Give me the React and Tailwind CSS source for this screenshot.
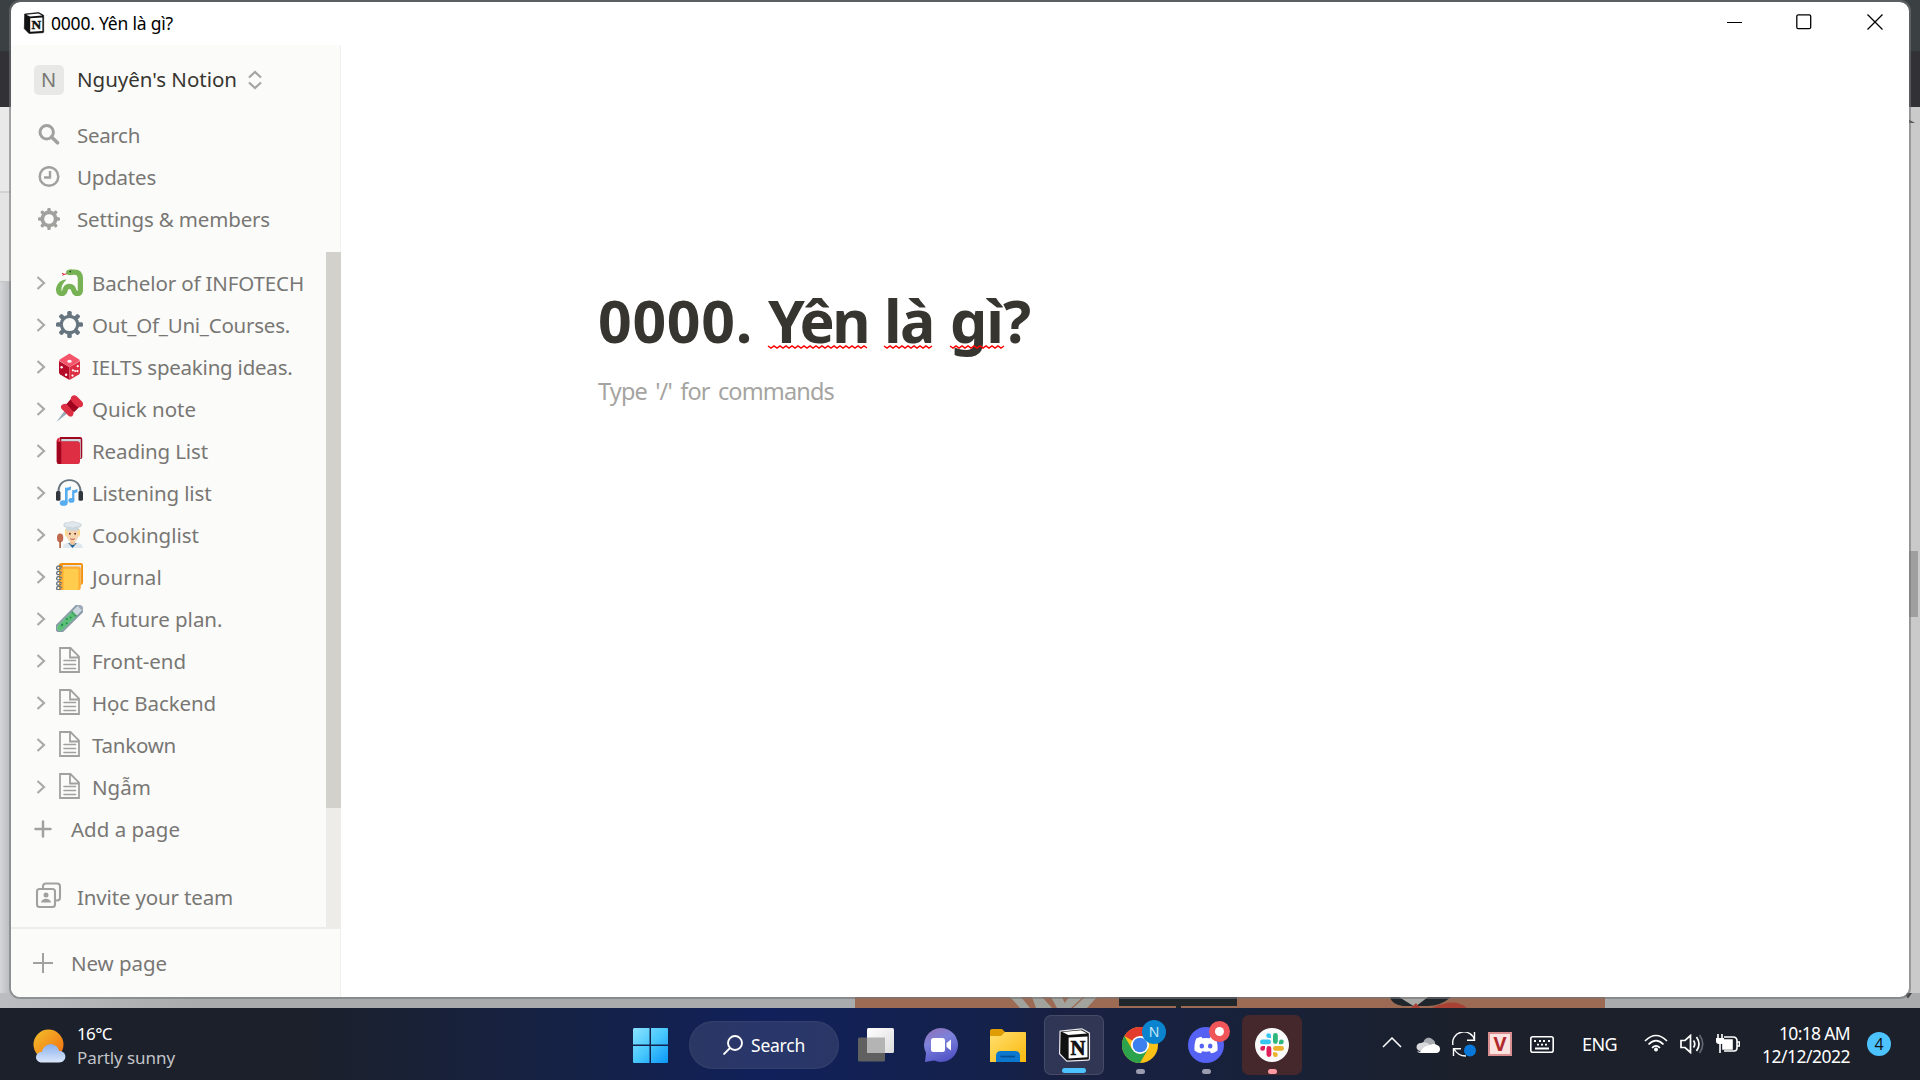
import React, { useLayoutEffect, useRef, useState } from "react";

/* Text whose tracking is adjusted so that the line fills a given width. */
function Fit({ w, className = "", children }) {
  const ref = useRef(null);
  const [ls, setLs] = useState(0);
  useLayoutEffect(() => {
    const natural = ref.current.getBoundingClientRect().width;
    setLs((w - natural) / [...String(children)].length);
  }, []);
  return (
    <span ref={ref} className={"inline-block whitespace-nowrap " + className} style={{ letterSpacing: ls }}>
      {children}
    </span>
  );
}

function NotionLogo({ className, halo }) {
  return (
    <svg className={className} viewBox="0 0 32 33">
      <path d="M2 3 23 .8 30.500 5v24.500q0 1.500-1.500 1.600L8.500 32.200 1.500 25z" fill="#111" stroke={halo ? "#e8e8ee" : "#111"} strokeWidth={halo ? 1.200 : 1} strokeLinejoin="round" />
      <path d="M4.300 4 22.500 2.300l5.700 3.100L10 6.800z" fill="#fff" />
      <path d="M10.300 9.300 28.600 8.200v20.300L10.300 29.700z" fill="#fff" />
      <text x="19.400" y="26" textAnchor="middle" fontSize="20" fontWeight="700" fontFamily="Liberation Serif, serif" fill="#111" stroke="#111" strokeWidth=".7">N</text>
    </svg>
  );
}

function Snake() {
  return (
    <svg viewBox="0 0 36 36" className="size-[27px]">
      <path d="M15 6 11 7.200 8 5.500M11 7.200 8.500 8.500" fill="none" stroke="#dd2e44" strokeWidth="1.400" />
      <path d="M14 14C5 14 0 21 0 29h7c0-6 2-10 7-15z" fill="#77b255" />
      <path d="M3.700 28c-.5 6 7.300 6.500 8.300 1 1-8 10.500-8 12 0 1.500 5.500 8.500 5 8.500-1V13c0-6-3-9-8-9h-5" fill="none" stroke="#77b255" strokeWidth="7" strokeLinecap="round" />
      <ellipse cx="19" cy="4.500" rx="5.500" ry="3.700" fill="#77b255" />
      <circle cx="19" cy="3.400" r="1.100" fill="#292f33" />
    </svg>
  );
}
function Gear() {
  return (
    <svg viewBox="0 0 36 36" className="size-[27px]">
      <g fill="#66757f">
        {[0, 45, 90, 135].map((a) => (
          <rect key={a} x="15" y="0" width="6" height="36" rx="2" transform={`rotate(${a} 18 18)`} />
        ))}
        <circle cx="18" cy="18" r="13" />
      </g>
      <circle cx="18" cy="18" r="8.800" fill="#fbfbfa" />
    </svg>
  );
}
function Die() {
  return (
    <svg viewBox="0 0 36 36" className="size-[27px]">
      <path d="M18 .5 31 8.500q1.500 1 0 2L18 19 5 10.500q-1.500-1 0-2z" fill="#f4556a" />
      <path d="M4 10.500l14 8.500v17L5.500 28.500Q4 27.500 4 26z" fill="#b50b28" />
      <path d="M32 10.500 18 19v17l12.500-7.500Q32 27.500 32 26z" fill="#dd2e44" />
      <g fill="#fff">
        <ellipse cx="18" cy="11" rx="3" ry="2" />
        <circle cx="7.500" cy="19" r="1.600" /><circle cx="13.500" cy="29" r="1.600" />
        <circle cx="29" cy="17.500" r="1.500" /><circle cx="22" cy="30" r="1.500" />
        <circle cx="28.500" cy="24" r="1.500" /><circle cx="22.500" cy="23" r="1.500" /><circle cx="25.500" cy="24" r="1.300" />
      </g>
    </svg>
  );
}
function Pin() {
  return (
    <svg viewBox="0 0 36 36" className="size-[27px]">
      <path d="M0.500 36 13 19l4 4z" fill="#99aab5" />
      <path d="M7 14c3-3 8-4 12 1 4 4 6 9 3 13-1 1-4 1-5 0L7 18q-1-2 0-4z" fill="#dd2e44" />
      <path d="m14 12 7-8 11 11-8 8z" fill="#a0041e" />
      <path d="M20 3c2-3 5-4 8-1l7 7c2 3 1 6-1 7-3 1-6 0-9-3s-6-6-5-10z" fill="#dd2e44" />
    </svg>
  );
}
function Book() {
  return (
    <svg viewBox="0 0 36 36" className="size-[27px]">
      <path d="M5 0h27q3 0 3 3v24q0 2-2 2L8 32z" fill="#a0041e" />
      <path d="M7 2.500h26v25l-3 2V6H7z" fill="#ccd6dd" />
      <path d="M5 1Q1 1 1 5v28q0 3 3 3h25q3 0 3-3V9q0-3-3-3H7Q4 6 5 3z" fill="#dd2e44" />
      <path d="M1 4q0 3 6 3v29H4q-3 0-3-3z" fill="#a0041e" />
    </svg>
  );
}
function Headphones() {
  return (
    <svg viewBox="0 0 36 36" className="size-[27px]">
      <path d="M3.500 20C2 8 9 1.500 18 1.500S34 8 32.500 20" fill="none" stroke="#66757f" strokeWidth="2.600" />
      <rect x="0" y="16" width="6" height="13" rx="2" fill="#31373d" />
      <rect x="30" y="16" width="6" height="13" rx="2" fill="#31373d" />
      <g fill="#55acee">
        <path d="M12 11.500q5 0 8-2v4.500q-2 1.500-4.500 1.500v16.500H12z" />
        <ellipse cx="10.200" cy="32" rx="5.200" ry="3.800" />
        <path d="M21.500 15q4 0 7-2v4.500q-2 1-4 1v10h-3z" />
        <ellipse cx="20.500" cy="28.500" rx="4" ry="3.200" />
      </g>
    </svg>
  );
}
function Chef() {
  return (
    <svg viewBox="0 0 36 36" className="size-[27px]">
      <path d="M9 36c0-5 4-7 8-7h10c5 0 9 3 9 7z" fill="#e1e8ed" />
      <path d="m16 29 6 7 6-7-6 2z" fill="#226699" />
      <rect x="18.500" y="24" width="7" height="8" rx="3" fill="#f1c39a" />
      <path d="M12 11h20v7q0 3-3 3H15q-3 0-3-3z" fill="#ffd983" />
      <ellipse cx="22" cy="18" rx="8" ry="10" fill="#f6d5b0" />
      <circle cx="18.500" cy="17" r="1.200" fill="#662113" /><circle cx="25.500" cy="17" r="1.200" fill="#662113" />
      <path d="M19 23.500q3 2 6 0" stroke="#c1694f" strokeWidth="1.500" fill="none" />
      <path d="M13.500 13V9Q9 8 10 4.500T16 2q6-3.500 12 0 5-.5 6 2.500T30.500 9v4z" fill="#ccd6dd" />
      <path d="M11 5q2-3 5-2 6-3 12 0 4-.5 5 2-3 3-6 2-5 3-10 0-3 2-6-2z" fill="#e1e8ed" />
      <ellipse cx="5.500" cy="22.500" rx="4.200" ry="5.800" fill="#c1694f" />
      <path d="M4.500 27h2v9h-2z" fill="#a0512f" />
    </svg>
  );
}
function Notebook() {
  return (
    <svg viewBox="0 0 36 36" className="size-[27px]">
      <path d="M8 0h25q3 0 3 3v23q0 3-3 3H8z" fill="#f4900c" />
      <path d="M9 2.500h24.500V27L31 29V6H9z" fill="#e1e8ed" />
      <path d="M4 3q0-3 4-3v36H7q-3 0-3-3z" fill="#f4900c" />
      <path d="M5 4.500h24q4 0 4 3V33q0 3-3 3H8q-3 0-3-3z" fill="#ffac33" />
      <path d="M10 7.500h18q2 0 2 2V33q0 3-3 3H10z" fill="#ffcc4d" />
      {[7, 14, 21, 28, 34].map((y) => (
        <path key={y} d={`M8 ${y - 1}Q2 ${y - 5} 1 ${y - 1}t6 1.500`} fill="none" stroke="#66757f" strokeWidth="1.800" />
      ))}
    </svg>
  );
}
function Tube() {
  return (
    <svg viewBox="0 0 36 36" className="size-[27px]">
      <g transform="rotate(45 18 18)">
        <path d="M12.500-3h11v38q0 6-5.500 6t-5.500-6z" fill="#ccd6dd" stroke="#8899a6" strokeWidth="2.500" />
        <path d="M13.800 8h8.400v27q0 4.500-4.200 4.500t-4.200-4.500z" fill="#5cc07a" />
        <path d="M13.800 8q4 3 8.400 0v3h-8.400z" fill="#3e9b5c" />
        <rect x="10" y="-5.500" width="16" height="4" rx="2" fill="#9eacba" />
        <g fill="#268d4a"><circle cx="18" cy="16" r="1.300" /><circle cx="16" cy="21" r="1.300" /><circle cx="20" cy="25" r="1.300" /><circle cx="17" cy="31" r="1.600" /></g>
      </g>
    </svg>
  );
}
function Doc() {
  return (
    <svg viewBox="0 0 22 26" className="ml-[3px] h-[26px] w-[22px]" fill="none" stroke="#a1a19e" strokeWidth="1.800">
      <path d="M1 1h10.500l8.500 8.500V25H1zM11 1v9.500h9" />
      <path d="M5 13.500h11.500M5 17.500h11.500M5 21.500h11.500" strokeWidth="1.600" strokeLinecap="round" />
    </svg>
  );
}

const pages = [
  ["Bachelor of INFOTECH", 212, Snake],
  ["Out_Of_Uni_Courses.", 198, Gear],
  ["IELTS speaking ideas.", 200.500, Die],
  ["Quick note", 104, Pin],
  ["Reading List", 116, Book],
  ["Listening list", 119.500, Headphones],
  ["Cookinglist", 107, Chef],
  ["Journal", 70, Notebook],
  ["A future plan.", 130.500, Tube],
  ["Front-end", 94, Doc],
  ["Học Backend", 124, Doc],
  ["Tankown", 84, Doc],
  ["Ngẫm", 59, Doc],
];

function Sidebar() {
  return (
    <aside className="flex w-[330px] shrink-0 flex-col border-r border-[#f1f1ef] bg-[#fbfbfa] text-[20.5px] text-[#787774]">
      <div className="flex h-[69px] items-center pl-[23px]">
        <div className="flex size-[30px] items-center justify-center rounded-[5px] bg-[#e8e8e6] pr-px text-[20px]">N</div>
        <Fit w={160} className="ml-[13px] font-[450] text-[#37352f]">Nguyên's Notion</Fit>
        <svg viewBox="0 0 14 20" className="ml-[11px] h-5 w-3.5" fill="none" stroke="#a3a3a0" strokeWidth="2.200">
          <path d="m1 7.500 6-5.500 6 5.500M1 12.500l6 5.500 6-5.500" />
        </svg>
      </div>
      <div className="flex h-[42px] items-center pl-[27px]">
        <svg viewBox="0 0 22 22" className="size-[22px]" fill="none" stroke="#a1a19e">
          <circle cx="8.700" cy="8.200" r="6.700" strokeWidth="3" /><path d="m13.500 13 6 5.800" strokeWidth="3.600" strokeLinecap="round" />
        </svg>
        <Fit w={63} className="ml-[17px]">Search</Fit>
      </div>
      <div className="flex h-[42px] items-center pl-[26.5px]">
        <svg viewBox="0 0 22 22" className="size-[22px]" fill="none" stroke="#a1a19e">
          <circle cx="11" cy="10.500" r="9.300" strokeWidth="2.500" /><path d="M12 5v6.500H6" strokeWidth="2.400" />
        </svg>
        <Fit w={79} className="ml-[17.5px]">Updates</Fit>
      </div>
      <div className="flex h-[42px] items-center pl-[26.5px]">
        <svg viewBox="0 0 22 22" className="size-[22px]">
          <g fill="#a1a19e">
            {[0, 45, 90, 135].map((a) => (
              <rect key={a} x="9.300" y="0" width="3.400" height="22" rx="1.200" transform={`rotate(${a} 11 11)`} />
            ))}
            <circle cx="11" cy="11" r="8.500" />
          </g>
          <circle cx="11" cy="11" r="4.800" fill="#fbfbfa" />
        </svg>
        <Fit w={193} className="ml-[17.5px]">Settings &amp; members</Fit>
      </div>

      <div className="mt-[12px] flex h-[675px]">
        <div className="flex grow flex-col pt-[10px]">
          {pages.map(([name, w, Icon]) => (
            <div key={name} className="flex h-[42px] items-center pl-[25px]">
              <svg viewBox="0 0 10 14" className="mb-px mr-[10px] h-3.5 w-2.5" fill="none" stroke="#aaaaa7" strokeWidth="2.200">
                <path d="m1.500 1 6.500 6-6.500 6" />
              </svg>
              <div className="mb-0.5 flex w-[36px]"><Icon /></div>
              <Fit w={w}>{name}</Fit>
            </div>
          ))}
          <div className="flex h-[42px] items-center pl-[23px]">
            <svg viewBox="0 0 18 18" className="size-[18px]" stroke="#a1a19e" strokeWidth="2.500" strokeLinecap="round"><path d="M9 1.500v15M1.500 9h15" /></svg>
            <Fit w={109} className="ml-[19px]">Add a page</Fit>
          </div>
          <div className="mt-[26px] flex h-[42px] items-center pl-[24px]">
            <svg viewBox="0 0 28 28" className="-mt-1 size-7" fill="none" stroke="#a1a19e" strokeWidth="2.100">
              <path d="M8 7V5.500Q8 2.500 11 2.500h11q3 0 3 3v11q0 3-3 3h-2" />
              <rect x="2" y="8" width="18" height="18" rx="2.500" />
              <circle cx="11" cy="14" r="2.500" fill="#a1a19e" stroke="none" /><path d="M6 21.500q1-3.700 5-3.700t5 3.700z" fill="#a1a19e" stroke="none" />
            </svg>
            <Fit w={156} className="ml-[14px]">Invite your team</Fit>
          </div>
        </div>
        <div className="-mr-px w-[15px] bg-[#edece9]"><div className="h-[556px] bg-[#d3d1cb]" /></div>
      </div>
      <div className="flex grow items-center border-t-2 border-[#ededeb] pl-[22px]">
        <svg viewBox="0 0 20 20" className="size-5" stroke="#a1a19e" strokeWidth="2" strokeLinecap="round"><path d="M10 .5v19M.5 10h19" /></svg>
        <Fit w={96} className="ml-[18px]">New page</Fit>
      </div>
    </aside>
  );
}

function Misspelt({ children, w, wave }) {
  const pts = [];
  for (let i = 0, x = 0; x <= wave; x += 3, i++) pts.push(`${x},${i % 2 ? 3 : 1}`);
  return (
    <span className="relative inline-block">
      <Fit w={w}>{children}</Fit>
      <svg className="absolute left-0 top-[61px] h-1 overflow-visible" style={{ width: wave }}>
        <polyline points={pts.join(" ")} fill="none" stroke="#f00" strokeWidth="1.500" />
      </svg>
    </span>
  );
}

function NotionWindow() {
  return (
    <div className="absolute left-[9px] top-0 flex h-[999px] w-[1902px] flex-col overflow-hidden rounded-[11px] border-2 border-[#737578]/60 bg-white bg-clip-padding">
      <header className="flex h-[43px] shrink-0 items-center justify-between">
        <div className="flex items-center pl-[12px] text-[17.5px] text-black">
          <NotionLogo className="mb-0.5 h-[22px] w-[22px]" />
          <Fit w={122} className="ml-[6px]">0000. Yên là gì?</Fit>
        </div>
        <div className="mb-[3px] flex items-center pr-[26px]">
          <div className="h-px w-[15px] bg-black" />
          <svg viewBox="0 0 16 16" className="ml-[54px] size-4" fill="none" stroke="#000" strokeWidth="1.300"><rect x=".8" y=".8" width="13.900" height="13.900" rx="1.500" /></svg>
          <svg viewBox="0 0 16 16" className="ml-[55px] size-4" stroke="#000" strokeWidth="1.300"><path d="m.5.5 15 15M15.500.5l-15 15" /></svg>
        </div>
      </header>
      <div className="flex grow">
        <Sidebar />
        <main className="flex grow flex-col pl-[257px] pt-[239px]">
          <h1 className="flex h-[72px] text-[59px] font-bold leading-[72px] text-[#37352f]">
            <Fit w={155} className="mr-[15px]">0000.</Fit>
            <Misspelt w={100} wave={100}>Yên</Misspelt>
            <span className="w-[16px]" />
            <Misspelt w={50} wave={49}>là</Misspelt>
            <span className="w-[16px]" />
            <Misspelt w={53} wave={54}>gì</Misspelt>
            <span>?</span>
          </h1>
          <p className="mt-[16px] text-[23.5px] leading-[38px] text-[#a5a4a1]"><Fit w={236} className="[word-spacing:3px]">Type '/' for commands</Fit></p>
        </main>
      </div>
    </div>
  );
}

/* The browser that shows round the edges of the front window. */
function Backdrop() {
  return (
    <div className="flex h-full flex-col bg-[#b0b2b4]">
      <div className="h-[51px] bg-[#3b4042]" />
      <div className="h-[56px] bg-[#323236]" />
      <div className="flex grow justify-between">
        <div className="flex w-[60px] flex-col">
          <div className="h-[84px] bg-[#e9e9e9]" />
          <div className="h-[90px] border-t-2 border-[#d2d2d2] bg-[#e4e4e4]" />
          <div className="grow border-t border-[#c4c4c4] bg-linear-to-r from-[#d4d6da] from-0% to-[#b4b6ba] to-20%" />
        </div>
        <div className="flex w-[60px] flex-col items-end bg-[#cacaca]">
          <svg viewBox="0 0 8 4" className="mr-[5px] mt-[12px] h-1 w-2" fill="#555"><path d="M0 4V0l1 0 7 4z" /></svg>
          <div className="mr-[2px] mt-[428px] h-[66px] w-[9px] bg-[#9f9f9f]" />
        </div>
      </div>
      <div className="flex h-[15px] items-end bg-linear-to-r from-[#bbbdc0] to-[#a9abac] to-10%">
        <svg viewBox="0 0 750 11" className="ml-[855px] h-[11px] w-[750px] bg-[#9d6b53]">
          <path d="m155 0 10 11h10L166 0zM177 0l4 11h16L187 0zM196 0l6 11h10l-5-11zM214 0l-8 11h10l12-11zM230 0l-12 11h14l10-11z" fill="#a3a39e" />
          <path d="M264 0h118v9h-56v2h-5V9h-57z" fill="#20272c" />
          <path d="M535 0h61q-10 9-24 9h-24q-12-2-13-9z" fill="#20272c" />
          <path d="m544 0 16 10 13-10z" fill="#aaa9a5" /><path d="m556 11 5-5 4 5zM577 11Q600 0 612 11z" fill="#a94234" />
        </svg>
        <svg viewBox="0 0 8 6" className="ml-[299px] mb-[9px] h-1.5 w-2" fill="#444"><path d="M0 0h8L4 5.500z" /></svg>
      </div>
    </div>
  );
}

function Tile({ children, tone = "", mark = "" }) {
  return (
    <div className={"relative mt-0.5 flex size-[60px] items-center justify-center rounded-[7px] " + tone}>
      {children}
      {mark && <div className={"absolute bottom-px h-[5px] rounded-full " + mark} />}
    </div>
  );
}

function Taskbar() {
  return (
    <footer className="flex h-[72px] items-center bg-linear-to-r from-[#1b202b] from-16% via-[#11205a] via-40% to-[#1b202b] to-76% text-[18px] leading-[24px] text-white">
      <div className="flex h-full w-full items-center bg-linear-to-r from-transparent from-52% via-[#1b2040]/80 via-56% to-transparent to-64%">
        <div className="flex w-[620px] items-center pl-[33px]">
          <svg viewBox="0 0 34 34" className="mt-1 size-[34px]">
            <defs>
              <linearGradient id="sun" x1="0" y1="0" x2="1" y2="1"><stop stopColor="#f4c02c" /><stop offset="1" stopColor="#ef6a10" /></linearGradient>
              <linearGradient id="cloud" x1="0" y1="0" x2="0" y2="1"><stop stopColor="#8ab0ee" /><stop offset="1" stopColor="#dbe7fb" /></linearGradient>
            </defs>
            <circle cx="15.500" cy="15.500" r="15" fill="url(#sun)" />
            <path d="M9 33.500c-8 0-8-10.500 0-10.500 2-10 15-10 17-1 9 0 8 11.500 0 11.500z" fill="url(#cloud)" />
          </svg>
          <div className="ml-[10px] flex flex-col pt-[3px] text-[17px]">
            <Fit w={35} className="self-start">16°C</Fit>
            <Fit w={98} className="self-start text-[#c3c5c9]">Partly sunny</Fit>
          </div>
        </div>
        <Tile>
          <svg viewBox="0 0 35 35" className="size-[35px]">
            <defs><linearGradient id="win" gradientUnits="userSpaceOnUse" x1="0" y1="0" x2="35" y2="35"><stop stopColor="#8be2ff" /><stop offset=".5" stopColor="#49c8fc" /><stop offset="1" stopColor="#0a97f8" /></linearGradient></defs>
            <path d="M1 0h15.500v16.500H0V1zM18 0h16q1 0 1 1v15.500H18zM0 18h16.500v17H1q-1 0-1-1zM18 18h17v16q0 1-1 1H18z" fill="url(#win)" />
          </svg>
        </Tile>
        <div className="ml-[9px] mr-[7px] mt-0.5 flex h-12 w-[150px] items-center rounded-full border border-white/5 bg-white/10 pl-[33px]">
          <svg viewBox="0 0 20 20" className="size-5" fill="none" stroke="#fff" strokeWidth="1.900"><circle cx="12" cy="8" r="7" /><path d="m7 13-6.500 6.500" /></svg>
          <Fit w={54} className="ml-[8px] text-[17.5px]">Search</Fit>
        </div>
        <div className="flex gap-[6px]">
          <Tile>
            <svg viewBox="0 0 36 34" className="h-[34px] w-9">
              <defs><linearGradient id="tv" x1="0" y1="0" x2="1" y2="1"><stop stopColor="#fff" /><stop offset="1" stopColor="#dcdcdc" /></linearGradient></defs>
              <rect x="0" y="9.500" width="27" height="24" rx="1.500" fill="#606060" />
              <rect x="9" y="0" width="27" height="25" rx="1.500" fill="url(#tv)" /><path d="M9 9.500h18V25H10q-1 0-1-1z" fill="#b4b4b4" />
            </svg>
          </Tile>
          <Tile>
            <svg viewBox="0 0 34 34" className="mr-0.5 size-[34px]">
              <defs><linearGradient id="chat" x1=".2" y1="0" x2=".6" y2="1"><stop stopColor="#8f72b8" /><stop offset=".4" stopColor="#7d82dc" /><stop offset="1" stopColor="#5052c4" /></linearGradient></defs>
              <path d="M17 0a17 17 0 1 1-7 32.500L1 34l1-9A17 17 0 0 1 17 0z" fill="url(#chat)" />
              <rect x="7" y="10" width="14" height="14" rx="2.500" fill="#fff" /><path d="m22.500 15 4.500-3.500v11L22.500 19z" fill="#fff" />
            </svg>
          </Tile>
          <Tile>
            <svg viewBox="0 0 36 33" className="mt-px h-[33px] w-9">
              <defs><linearGradient id="fold" x1="0" y1="0" x2="1" y2="1"><stop stopColor="#ffdf70" /><stop offset="1" stopColor="#fbb90c" /></linearGradient></defs>
              <path d="M0 9V2q0-2 2-2h10l4 4-4 5z" fill="#e09c05" />
              <path d="M0 7h11l4-4h20q1 0 1 1v29H0z" fill="url(#fold)" />
              <path d="M6 33v-6q0-5 5-5h14q5 0 5 5v6z" fill="#0b77cf" /><path d="M10.500 27.500h14.500" stroke="#064d91" strokeWidth="1.700" />
            </svg>
          </Tile>
          <Tile tone="border border-white/10 bg-white/10" mark="w-6 bg-[#4cc2ff] bottom-0">
            <NotionLogo className="h-[34px] w-[33px]" halo />
          </Tile>
          <Tile mark="w-[9px] bg-[#9a9caf]">
            <svg viewBox="0 0 36 36" className="size-9">
              <circle cx="18" cy="18" r="18" fill="#fbc116" />
              <path d="M18 18 2.400 9A18 18 0 0 1 33.600 9H18z" fill="#e33b2e" />
              <path d="M2.400 9A18 18 0 0 0 18 36l7.800-13.500L18 18 10.200 22.500z" fill="#2da24c" />
              <circle cx="18" cy="18" r="9" fill="#fff" /><circle cx="18" cy="18" r="7.300" fill="#3b80ee" />
            </svg>
            <div className="absolute left-[32px] top-[5px] flex size-6 items-center justify-center rounded-full bg-[#0a84cf] text-[14px] leading-none text-[#cce8f8]">N</div>
          </Tile>
          <Tile mark="w-[9px] bg-[#9a9caf]">
            <svg viewBox="0 0 36 36" className="size-9">
              <circle cx="18" cy="18" r="18" fill="#5662f3" />
              <path d="M13.500 9.800q-3 .4-5.200 1.700Q6 16.500 6.500 23.500 9.500 26 13 26.300l1.200-2q3.800.8 7.600 0l1.200 2q3.500-.3 6.500-2.800.5-7-1.800-12-2.200-1.300-5.200-1.700l-.8 1.500q-3.700-.5-7.400 0z" fill="#fff" />
              <ellipse cx="13.800" cy="19" rx="2.300" ry="2.500" fill="#5662f3" /><ellipse cx="22.200" cy="19" rx="2.300" ry="2.500" fill="#5662f3" />
            </svg>
            <div className="absolute left-[33px] top-[6px] flex size-[21px] items-center justify-center rounded-full bg-[#f0555a]"><div className="size-[9px] rounded-full bg-white" /></div>
          </Tile>
          <Tile tone="bg-[#45282b]" mark="w-[9px] bg-[#ff9aa5]">
            <svg viewBox="0 0 34 34" className="size-[34px]">
              <circle cx="17" cy="17" r="17" fill="#fafafa" />
              <g fill="#36c5f0"><rect x="5" y="11.500" width="11" height="4.800" rx="2.400" /><path d="M16 10h-2.500A2.400 2.400 0 1 1 16 7.500z" /></g>
              <g fill="#2eb67d"><rect x="18" y="5" width="4.800" height="11" rx="2.400" /><path d="M24 16.300v-2.500a2.400 2.400 0 1 1 2.500 2.500z" /></g>
              <g fill="#ecb22e"><rect x="18" y="18" width="11" height="4.800" rx="2.400" /><path d="M18 24.200h2.500a2.400 2.400 0 1 1-2.500 2.500z" /></g>
              <g fill="#e01e5a"><rect x="11.500" y="18" width="4.800" height="11" rx="2.400" /><path d="M10 18v2.500A2.400 2.400 0 1 1 7.500 18z" /></g>
            </svg>
          </Tile>
        </div>

        <div className="ml-[80px] flex items-center">
          <svg viewBox="0 0 20 11" className="mb-1 h-[11px] w-5" fill="none" stroke="#fff" strokeWidth="1.500"><path d="m1 10 9-9 9 9" /></svg>
          <svg viewBox="0 0 24 17" className="ml-[14px] h-[17px] w-6">
            <path d="M7 9C7 2 13 0 16 3q4 2 3 6z" fill="#a9abb2" /><path d="M5 15c-6 0-6-8 0-8 3-2 8 0 10 3l-6 5z" fill="#d8d9db" />
            <path d="M4 16q3-6 10-7 4-2 7 0 3 1 3 4 0 4-4 4H5q-3 0-4-2z" fill="#fff" />
          </svg>
          <svg viewBox="0 0 24 25" className="ml-3 h-[25px] w-6" fill="none" stroke="#fff" strokeWidth="1.400">
            <path d="M1 13A11 10.500 0 0 1 22.500 8M22.500 0v8.300H15M1.500 24v-7.300H9M2 17q4 7 12 7" />
            <circle cx="18" cy="18.500" r="6" fill="#0a78d8" stroke="none" />
          </svg>
          <div className="ml-3 flex size-6 items-center justify-center border-2 border-[#d98f8f] bg-[#fbe3e1] text-[20px] font-bold leading-none text-[#b02a2c]">V</div>
          <svg viewBox="0 0 24 17" className="ml-[18px] h-[17px] w-6" fill="none" stroke="#fff" strokeWidth="1.600">
            <rect x=".8" y=".8" width="22.400" height="15.400" rx="2" /><path d="M4 5h2m3 0h2m2 0h2m3 0h2M7 8.700h2m2 0h2m2 0h2M5 12.500h14" strokeWidth="1.800" />
          </svg>
          <Fit w={35} className="ml-7 text-[18px]">ENG</Fit>
          <svg viewBox="0 0 24 18" className="mb-0.5 ml-[27px] h-[18px] w-6" fill="none" stroke="#fff" strokeWidth="1.700">
            <path d="M1 7q11-11 22 0M4.500 10.500q7.500-7.500 15 0M8 13.800q4-4 8 0" /><circle cx="12" cy="15.500" r="2" fill="#fff" stroke="none" />
          </svg>
          <svg viewBox="0 0 24 20" className="ml-3 h-5 w-6" fill="none" stroke="#fff" strokeWidth="1.700">
            <path d="M1 6.500h4L10.500 1.500v17L5 13.500H1zM13.500 6.500q2.500 3.500 0 7M16.500 3q5 7 0 14" /><path d="M19.500 1q6.500 9 0 18" stroke="#62666f" />
          </svg>
          <svg viewBox="0 0 24 19" className="mb-0.5 ml-3 h-[19px] w-6" fill="none" stroke="#fff" strokeWidth="1.600">
            <path d="M8 3h9q4 0 4 4v7q0 3-3 3H8M21.500 8h2v4h-2" /><path d="M7 6h9v9H7z" fill="#fff" />
            <path d="M0 4h8v3q0 3-3 3H3q-3 0-3-3z" fill="#fff" stroke="none" /><path d="M2 0v4M6 0v4M4 9v10" />
          </svg>
        </div>
        <div className="flex w-[110px] flex-col items-end pt-px text-[17.500px] leading-[23px]">
          <Fit w={71}>10:18 AM</Fit>
          <Fit w={88}>12/12/2022</Fit>
        </div>
        <div className="ml-[17px] flex size-6 items-center justify-center rounded-full bg-[#4cc2ff] text-[16px] leading-none text-[#111]">4</div>
      </div>
    </footer>
  );
}

export default function App() {
  return (
    <div className="h-[1080px] w-[1920px] overflow-hidden font-['Noto_Sans','Open_Sans',sans-serif]">
      <div className="relative h-[1008px]">
        <Backdrop />
        <NotionWindow />
      </div>
      <Taskbar />
    </div>
  );
}
